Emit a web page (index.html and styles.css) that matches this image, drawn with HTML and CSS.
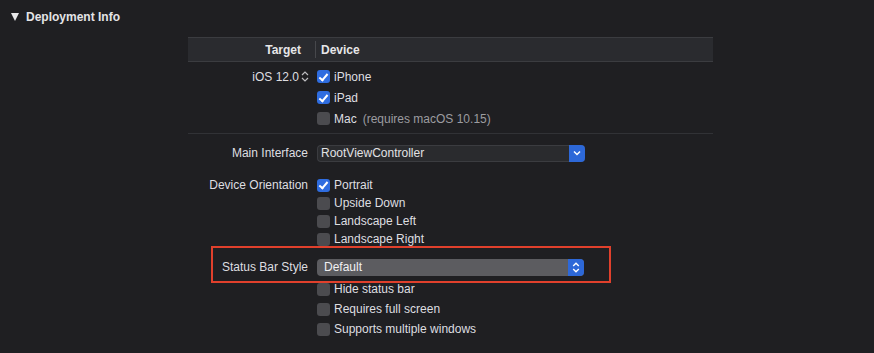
FILE: index.html
```html
<!DOCTYPE html>
<html lang="en">
<head>
    <meta charset="UTF-8">
    <title>Deployment Info</title>
    <link rel="stylesheet" href="styles.css">
</head>
<body>
    <div class="section-title">
        <span class="disclosure"></span>
        <span>Deployment Info</span>
    </div>
    <div class="info">
        <div class="table-head">
            <div class="label">Target</div>
            <div class="head-sep"></div>
            <div class="head-value">Device</div>
        </div>

        <div class="group devices">
            <div class="row">
                <div class="label">iOS 12.0
                    <svg class="stepper" width="8" height="11" viewBox="0 0 8 11"><path d="M1 4 L4 1 L7 4 M1 7 L4 10 L7 7" fill="none" stroke="#bdbdc0" stroke-width="1.2"/></svg>
                </div>
                <div class="control"><span class="check on"></span>iPhone</div>
            </div>
            <div class="row">
                <div class="label"></div>
                <div class="control"><span class="check on"></span>iPad</div>
            </div>
            <div class="row">
                <div class="label"></div>
                <div class="control"><span class="check"></span>Mac<span class="note">(requires macOS 10.15)</span></div>
            </div>
        </div>

        <div class="divider"></div>

        <div class="row main-interface">
            <div class="label">Main Interface</div>
            <div class="control">
                <div class="combo">
                    <span class="combo-text">RootViewController</span>
                    <span class="combo-btn">
                        <svg width="8" height="6" viewBox="0 0 8 6"><path d="M1 1.5 L4 4.5 L7 1.5" fill="none" stroke="#fff" stroke-width="1.5"/></svg>
                    </span>
                </div>
            </div>
        </div>

        <div class="group orientation">
            <div class="row">
                <div class="label">Device Orientation</div>
                <div class="control"><span class="check on"></span>Portrait</div>
            </div>
            <div class="row">
                <div class="label"></div>
                <div class="control"><span class="check"></span>Upside Down</div>
            </div>
            <div class="row">
                <div class="label"></div>
                <div class="control"><span class="check"></span>Landscape Left</div>
            </div>
            <div class="row">
                <div class="label"></div>
                <div class="control"><span class="check"></span>Landscape Right</div>
            </div>
        </div>

        <div class="row status-style">
            <div class="label">Status Bar Style</div>
            <div class="control">
                <div class="popup">
                    <span class="popup-text">Default</span>
                    <span class="combo-btn">
                        <svg width="8" height="11" viewBox="0 0 8 11"><path d="M1.2 4 L4 1.3 L6.8 4 M1.2 7 L4 9.7 L6.8 7" fill="none" stroke="#fff" stroke-width="1.4"/></svg>
                    </span>
                </div>
            </div>
        </div>

        <div class="group status-options">
            <div class="row">
                <div class="label"></div>
                <div class="control"><span class="check"></span>Hide status bar</div>
            </div>
            <div class="row">
                <div class="label"></div>
                <div class="control"><span class="check"></span>Requires full screen</div>
            </div>
            <div class="row">
                <div class="label"></div>
                <div class="control"><span class="check"></span>Supports multiple windows</div>
            </div>
        </div>
    </div>
</body>
</html>
```

FILE: styles.css
```css
body {
    margin: 0;
    background-color: #1f1f22;
    color: #dedee0;
    font-family: "Liberation Sans", Arial, sans-serif;
    font-size: 12px;
    height: 353px;
    overflow: hidden;
}
.section-title {
    display: flex;
    align-items: center;
    height: 14px;
    padding: 10px 0 0 11px;
    font-weight: bold;
    color: #e4e4e6;
}
.disclosure {
    width: 0;
    height: 0;
    border-left: 4.5px solid transparent;
    border-right: 4.5px solid transparent;
    border-top: 8px solid #e8e8ea;
    margin-right: 7px;
}
.info {
    width: 525px;
    margin: 13px 0 0 188px;
}
.table-head {
    display: flex;
    align-items: center;
    height: 23px;
    background-color: #2a2b2f;
    border-top: 1px solid #3b3c40;
    border-bottom: 1px solid #3b3c40;
    font-weight: bold;
    color: #e6e6e8;
}
.table-head .label {
    width: 113px;
    text-align: right;
}
.head-sep {
    width: 1px;
    height: 17px;
    background-color: #47484c;
    margin: 0 5px 0 14px;
}
.row {
    display: flex;
    align-items: center;
}
.label {
    width: 120px;
    flex-shrink: 0;
    text-align: right;
    display: flex;
    justify-content: flex-end;
    align-items: center;
}
.control {
    display: flex;
    align-items: center;
    margin-left: 9px;
}
.stepper {
    margin-left: 2px;
    margin-right: -1px;
}
.check {
    width: 13px;
    height: 13px;
    border-radius: 3px;
    background-color: #4b4b4f;
    margin-right: 4px;
    display: inline-block;
    position: relative;
}
.check.on {
    background-color: #2f6de0;
}
.check.on::after {
    content: "";
    position: absolute;
    left: 4px;
    top: 1.5px;
    width: 3px;
    height: 7px;
    border-right: 2px solid #ffffff;
    border-bottom: 2px solid #ffffff;
    transform: rotate(40deg);
}
.note {
    color: #9c9ca0;
    margin-left: 6px;
}
.devices {
    padding-top: 4px;
}
.devices .row {
    height: 21px;
}
.divider {
    height: 1px;
    background-color: #313236;
    margin-top: 4px;
}
.main-interface {
    height: 18px;
    margin-top: 10px;
}
.combo {
    width: 268px;
    height: 17px;
    display: flex;
    align-items: center;
    justify-content: space-between;
    background-color: #2a2b2e;
    border: 1px solid #3b3c40;
    border-right: none;
    border-radius: 4px;
    box-sizing: border-box;
}
.combo-text {
    padding-left: 3px;
    color: #e2e2e4;
}
.combo-btn {
    width: 16px;
    height: 17px;
    background-color: #2d68d8;
    border-radius: 0 4px 4px 0;
    display: flex;
    align-items: center;
    justify-content: center;
}
.orientation {
    margin-top: 14px;
}
.orientation .row {
    height: 18px;
}
.status-style {
    position: relative;
    height: 18px;
    margin-top: 10px;
}
.status-style::after {
    content: "";
    position: absolute;
    left: 23px;
    top: -12px;
    width: 400px;
    height: 37px;
    border: 2.5px solid #e0402c;
    box-sizing: border-box;
}
.popup {
    width: 267px;
    height: 17px;
    display: flex;
    align-items: center;
    justify-content: space-between;
    background-color: #5c5c60;
    border-radius: 4px;
}
.popup-text {
    padding-left: 7px;
    color: #f0f0f2;
}
.status-options {
    margin-top: 3px;
}
.status-options .row {
    height: 20px;
}
```
